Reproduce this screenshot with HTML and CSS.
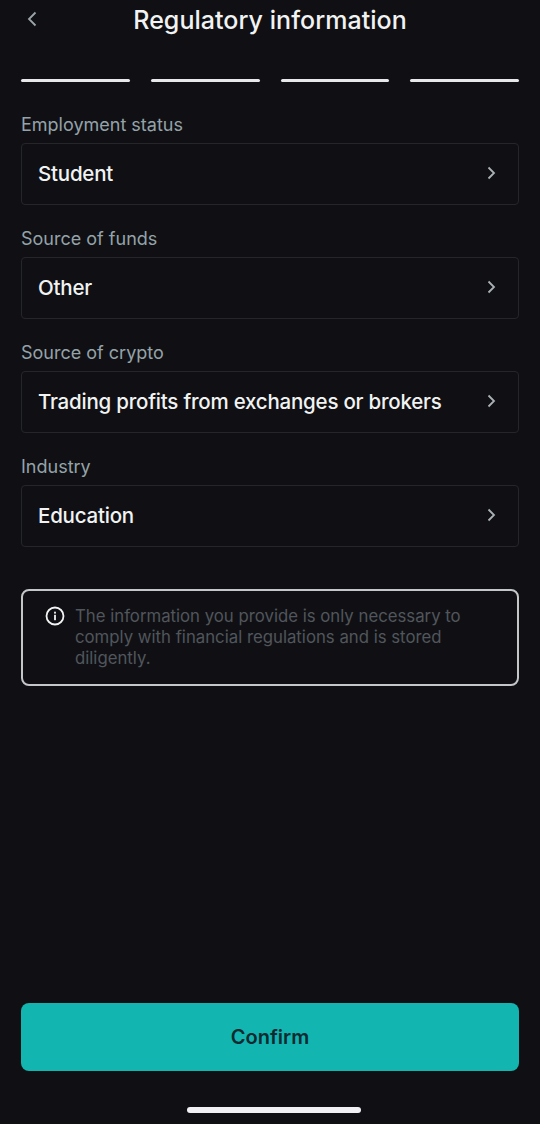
FILE: index.html
```html
<!DOCTYPE html>
<html lang="en">
<head>
<meta charset="utf-8">
<title>Regulatory information</title>
<link rel="stylesheet" href="styles.css">
</head>
<body>
<main class="screen">
  <header class="top">
    <svg class="back" width="12" height="18" viewBox="0 0 12 18" fill="none"><path d="M9.500 2.500 3 9l6.500 6.500" stroke="#9aa5aa" stroke-width="1.800"/></svg>
    <h1 class="title">Regulatory information</h1>
  </header>
  <div class="steps"><span></span><span></span><span></span><span></span></div>
  <section class="fields">
    <div class="field">
      <div class="label">Employment status</div>
      <div class="select"><span>Student</span><svg width="12" height="16" viewBox="0 0 12 16" fill="none"><path d="M2.500 2.500 8 8l-5.500 5.500" stroke="#aab2b6" stroke-width="1.800"/></svg></div>
    </div>
    <div class="field">
      <div class="label">Source of funds</div>
      <div class="select"><span>Other</span><svg width="12" height="16" viewBox="0 0 12 16" fill="none"><path d="M2.500 2.500 8 8l-5.500 5.500" stroke="#aab2b6" stroke-width="1.800"/></svg></div>
    </div>
    <div class="field">
      <div class="label">Source of crypto</div>
      <div class="select"><span>Trading profits from exchanges or brokers</span><svg width="12" height="16" viewBox="0 0 12 16" fill="none"><path d="M2.500 2.500 8 8l-5.500 5.500" stroke="#aab2b6" stroke-width="1.800"/></svg></div>
    </div>
    <div class="field">
      <div class="label">Industry</div>
      <div class="select"><span>Education</span><svg width="12" height="16" viewBox="0 0 12 16" fill="none"><path d="M2.500 2.500 8 8l-5.500 5.500" stroke="#aab2b6" stroke-width="1.800"/></svg></div>
    </div>
  </section>
  <aside class="notice">
    <svg class="info" width="20" height="20" viewBox="0 0 20 20" fill="none"><circle cx="10" cy="10" r="8.500" stroke="#f2f3f3" stroke-width="1.800"/><rect x="9.100" y="8.800" width="1.800" height="5.400" fill="#f2f3f3"/><rect x="9.100" y="5.700" width="1.800" height="1.900" fill="#f2f3f3"/></svg>
    <p>The information you provide is only necessary to comply with financial regulations and is stored diligently.</p>
  </aside>
  <div class="spacer"></div>
  <button class="confirm">Confirm</button>
  <div class="home"></div>
</main>
</body>
</html>
```
FILE: styles.css
```css
* { box-sizing: border-box; }
html, body { margin: 0; height: 100%; background: #101014; }
body { font-family: Inter, "Liberation Sans", sans-serif; overflow: hidden; }
.screen {
  width: 540px;
  height: 1124px;
  padding: 0 21px;
  display: flex;
  flex-direction: column;
}
.top {
  height: 40px;
  display: flex;
  align-items: center;
  justify-content: center;
  position: relative;
}
.back { position: absolute; left: 5px; top: 10px; }
.title {
  margin: 0;
  color: #f1f3f3;
  font-size: 25px;
  font-weight: 500;
  letter-spacing: 0.04px;
}
.steps {
  margin-top: 39px;
  display: flex;
  gap: 21px;
}
.steps span {
  flex: 1;
  height: 3px;
  border-radius: 2px;
  background: #e6e8ea;
}
.fields {
  margin-top: 32px;
  display: flex;
  flex-direction: column;
  gap: 23px;
}
.label {
  height: 23px;
  line-height: 22px;
  color: #94a3a9;
  font-size: 18px;
}
.select {
  margin-top: 6px;
  height: 62px;
  padding: 0 21px 2px 16px;
  display: flex;
  align-items: center;
  justify-content: space-between;
  border: 1px solid #24262a;
  border-radius: 4px;
  color: #f1f3f3;
  font-size: 20.500px;
  font-weight: 500;
  letter-spacing: -0.22px;
}
.select svg { margin-right: -1px; }
.notice {
  margin-top: 42px;
  height: 97px;
  padding: 15px 20px 0 22px;
  display: flex;
  gap: 11px;
  border: 2px solid #c4c7c8;
  border-radius: 8px;
}
.info { flex: none; }
.notice p {
  margin: 0;
  margin-left: -1px;
  color: #51565c;
  font-size: 16.750px;
  line-height: 21px;
}
.spacer { flex: 1; }
.confirm {
  height: 68px;
  width: 498px;
  border: 0;
  border-radius: 8px;
  background: #13b5b1;
  color: #0c2a30;
  font-family: inherit;
  font-size: 20px;
  font-weight: 600;
}
.home {
  margin: 36px 0 11px 166px;
  width: 174px;
  height: 6px;
  border-radius: 3px;
  background: #f1f1f5;
}
```
